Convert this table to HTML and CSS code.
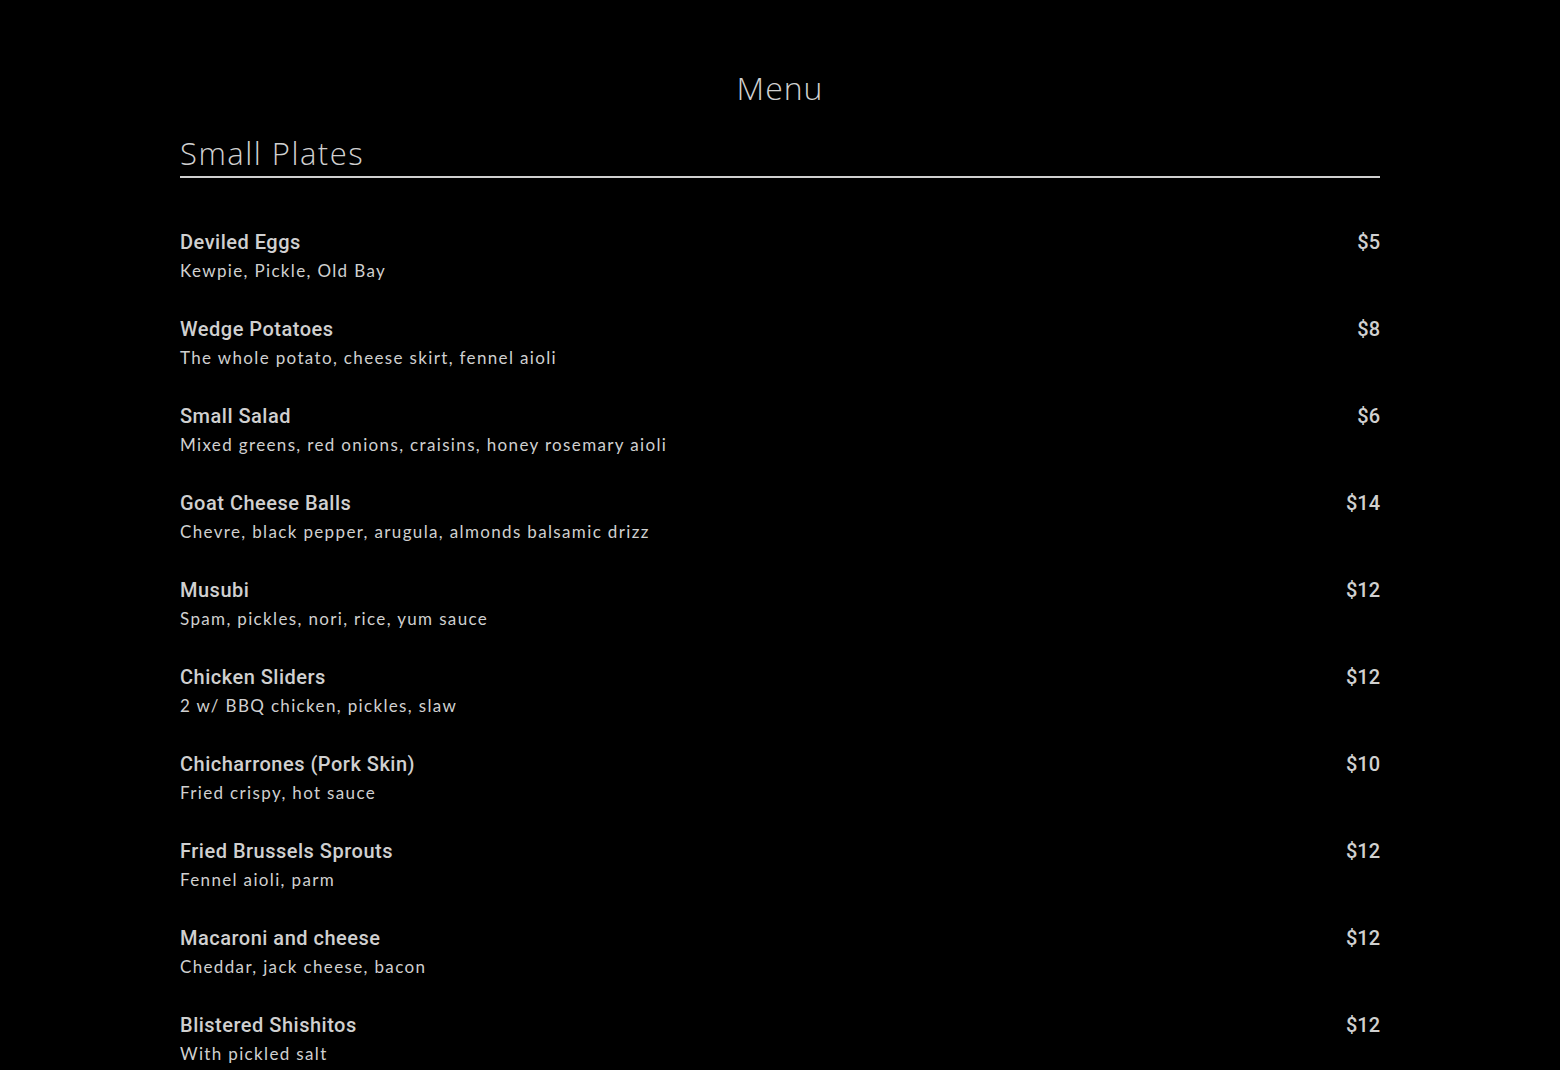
FILE: index.html
```html
<!DOCTYPE html>
<html lang="en">
<head>
<meta charset="UTF-8">
<title>Menu</title>
<link rel="stylesheet" href="styles.css">
</head>
<body>
<div class="menu">
    <h1 class="title">Menu</h1>
    <h2 class="section-title">Small Plates</h2>

    <div class="items">
        <div class="item">
            <div class="row"><span class="name">Deviled Eggs</span><span class="price">$5</span></div>
            <div class="desc">Kewpie, Pickle, Old Bay</div>
        </div>
        <div class="item">
            <div class="row"><span class="name">Wedge Potatoes</span><span class="price">$8</span></div>
            <div class="desc">The whole potato, cheese skirt, fennel aioli</div>
        </div>
        <div class="item">
            <div class="row"><span class="name">Small Salad</span><span class="price">$6</span></div>
            <div class="desc">Mixed greens, red onions, craisins, honey rosemary aioli</div>
        </div>
        <div class="item">
            <div class="row"><span class="name">Goat Cheese Balls</span><span class="price">$14</span></div>
            <div class="desc">Chevre, black pepper, arugula, almonds balsamic drizz</div>
        </div>
        <div class="item">
            <div class="row"><span class="name">Musubi</span><span class="price">$12</span></div>
            <div class="desc">Spam, pickles, nori, rice, yum sauce</div>
        </div>
        <div class="item">
            <div class="row"><span class="name">Chicken Sliders</span><span class="price">$12</span></div>
            <div class="desc">2 w/ BBQ chicken, pickles, slaw</div>
        </div>
        <div class="item">
            <div class="row"><span class="name">Chicharrones (Pork Skin)</span><span class="price">$10</span></div>
            <div class="desc">Fried crispy, hot sauce</div>
        </div>
        <div class="item">
            <div class="row"><span class="name">Fried Brussels Sprouts</span><span class="price">$12</span></div>
            <div class="desc">Fennel aioli, parm</div>
        </div>
        <div class="item">
            <div class="row"><span class="name">Macaroni and cheese</span><span class="price">$12</span></div>
            <div class="desc">Cheddar, jack cheese, bacon</div>
        </div>
        <div class="item">
            <div class="row"><span class="name">Blistered Shishitos</span><span class="price">$12</span></div>
            <div class="desc">With pickled salt</div>
        </div>
    </div>
</div>
</body>
</html>
```

FILE: styles.css
```css
body, html {
    margin:0; padding:0;
    background:#000;
    color:#d0d0d0;
}
.menu {
    width:1200px; margin:0 auto; padding-top:68px;
}
.title {
    margin:0; text-align:center;
    font-family:'Open Sans',sans-serif; font-weight:300;
    font-size:32px; line-height:40px; letter-spacing:1px;
}
.section-title {
    margin:27px 0 0; padding-bottom:5px;
    font-family:'Open Sans',sans-serif; font-weight:300;
    font-size:31px; line-height:36px; letter-spacing:1.5px;
    border-bottom:2px solid #cfcfcf;
}
.items {
    display:flex; flex-direction:column; gap:35px;
    margin-top:52px;
}
.item {
    display:flex; flex-direction:column; gap:6px;
}
.row {
    display:flex; justify-content:space-between;
    font-family:'Roboto',sans-serif; font-weight:500;
    font-size:20px; line-height:24px;
}
.name { letter-spacing:0.5px; }
.desc {
    font-family:'Lato',sans-serif;
    font-size:17px; line-height:22px; letter-spacing:1.35px;
}
```
